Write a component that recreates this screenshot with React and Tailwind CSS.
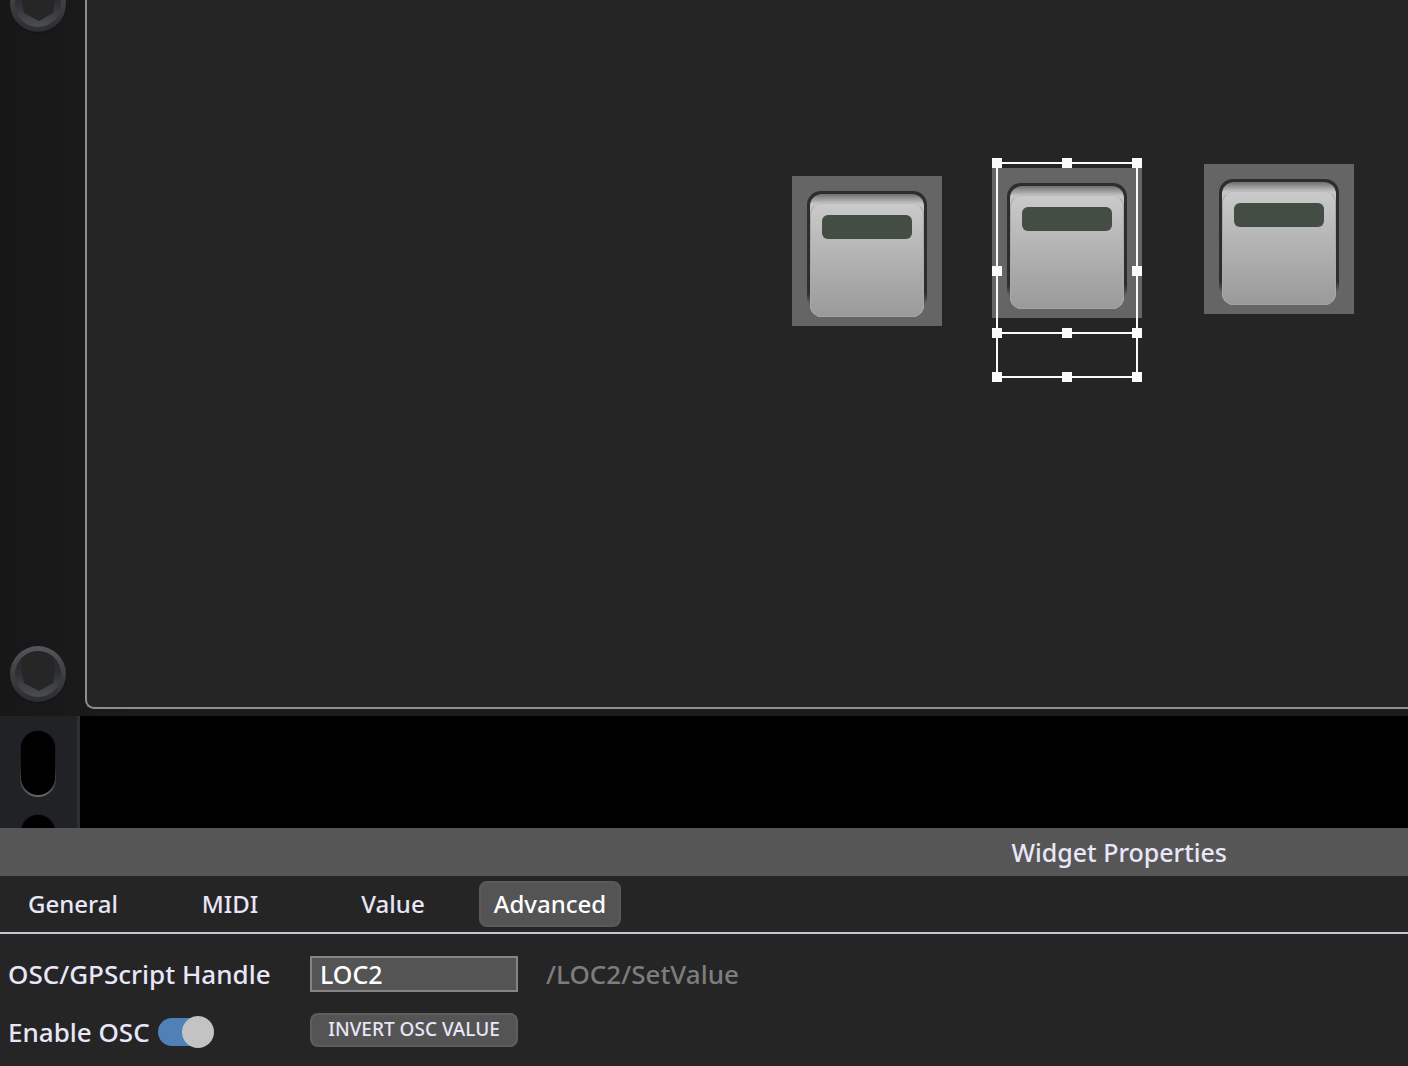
import React, { useState } from 'react';

function Screw({ id }) {
  return (
    <svg className="block size-15 shrink-0" viewBox="0 0 60 60" aria-hidden="true">
      <defs>
        <linearGradient id={`${id}-rim`} x1="0" y1="0" x2="0" y2="1">
          <stop offset="0" stopColor="#54575b" />
          <stop offset="0.5" stopColor="#3c3e42" />
          <stop offset="1" stopColor="#2b2d30" />
        </linearGradient>
        <linearGradient id={`${id}-bowl`} x1="0" y1="0" x2="0" y2="1">
          <stop offset="0" stopColor="#222324" />
          <stop offset="0.5" stopColor="#2e3033" />
          <stop offset="0.8" stopColor="#414347" />
          <stop offset="1" stopColor="#4b4d52" />
        </linearGradient>
      </defs>
      <circle cx="30" cy="31" r="28.5" fill="#151516" />
      <circle cx="30" cy="30" r="28" fill={`url(#${id}-rim)`} />
      <circle cx="30" cy="30" r="23" fill={`url(#${id}-bowl)`} />
      <path d="M17 12 Q30 4 44 12 L47 25 L45 39 L31 47 L16 39 L13 24 Z" fill="#262626" />
    </svg>
  );
}

function RackSlot() {
  return (
    <div className="h-[67px] w-9 shrink-0 rounded-full bg-linear-to-b from-[#1a1b1e] from-50% to-[#65666a] px-px pt-px pb-0.5">
      <div className="size-full rounded-full bg-black" />
    </div>
  );
}

function LedButton({ label, className }) {
  return (
    <button
      type="button"
      aria-label={label}
      className={`absolute flex size-[150px] justify-center bg-[#656565] pt-[15px] ${className}`}
    >
      <span className="block h-[120px] w-[120px] rounded-[14px] bg-linear-to-b from-[#2d2d2d] from-85% to-[#656565] to-95% px-[3px] pt-[3px]">
        <span className="flex h-[123px] flex-col rounded-xl bg-linear-to-b from-[#707070] to-[#c6c6c6] to-8%">
          <span className="mt-[9px] flex flex-1 items-start justify-center rounded-xl border border-x-[#a8a8a8] border-t-[#bcbcbc] border-b-[#a2a2a2] bg-linear-to-b from-[#cacaca] to-[#9a9a9a] pt-[11px]">
            <span className="h-6 w-[90px] rounded-md bg-[#444d43]" />
          </span>
        </span>
      </span>
    </button>
  );
}

function Handle({ className }) {
  return <span className={`absolute size-2.5 bg-[#fafafa] ${className}`} />;
}

function Selection() {
  return (
    <div className="pointer-events-none absolute top-[162px] left-[996px] w-[142px]">
      <div className="relative h-[172px] border-2 border-[#fafafa]">
        <Handle className="-top-1.5 -left-1.5" />
        <Handle className="-top-1.5 left-16" />
        <Handle className="-top-1.5 -right-1.5" />
        <Handle className="top-[102px] -left-1.5" />
        <Handle className="top-[102px] -right-1.5" />
        <Handle className="-bottom-1.5 -left-1.5" />
        <Handle className="-bottom-1.5 left-16" />
        <Handle className="-right-1.5 -bottom-1.5" />
      </div>
      <div className="relative h-11 border-x-2 border-b-2 border-[#fafafa]">
        <Handle className="-bottom-1.5 -left-1.5" />
        <Handle className="-bottom-1.5 left-16" />
        <Handle className="-right-1.5 -bottom-1.5" />
      </div>
    </div>
  );
}

const tabs = ['General', 'MIDI', 'Value', 'Advanced'];

export default function App() {
  const [active, setActive] = useState('Advanced');
  const [handle, setHandle] = useState('LOC2');
  const [enabled, setEnabled] = useState(true);

  return (
    <div className="flex min-h-screen flex-col overflow-hidden bg-[#252525] font-['Noto_Sans',sans-serif] text-[25px] leading-9 font-medium text-[#e8e6f8]">
      <main className="flex min-h-[400px] flex-1 bg-linear-to-r from-[#171717] to-[#1c1c1c] to-10% pb-[7px]">
        <div className="flex w-[85px] shrink-0 flex-col justify-between pl-2">
          <div className="-mt-[26px]">
            <Screw id="upper" />
          </div>
          <div className="mb-[5px]">
            <Screw id="lower" />
          </div>
        </div>
        <div className="relative flex-1 rounded-bl-[9px] border-b-2 border-l-2 border-[#8e8e8e] bg-[#252525]">
          <div className="absolute top-0 -left-[87px]">
            <LedButton label="LOC1" className="top-[176px] left-[792px]" />
            <LedButton label="LOC2" className="top-[168px] left-[992px]" />
            <LedButton label="LOC3" className="top-[164px] left-[1204px]" />
            <Selection />
          </div>
        </div>
      </main>

      <div className="flex h-28 shrink-0 overflow-hidden bg-black">
        <div className="flex w-20 flex-col gap-[17px] border-r-3 border-[#2e2f33] bg-[#212226] pt-[14px] pl-5">
          <RackSlot />
          <RackSlot />
        </div>
      </div>

      <section className="flex min-h-[238px] shrink-0 flex-col">
        <h2 className="flex h-12 items-center justify-end bg-[#565656] pr-[181px]">Widget Properties</h2>

        <nav className="flex h-[58px] items-center gap-[15px] border-b-2 border-[#c9c6d4] pl-0.5 text-[24px]">
          {tabs.map((tab) => (
            <button
              key={tab}
              type="button"
              onClick={() => setActive(tab)}
              className={`flex h-[46px] w-[142px] items-center justify-center rounded-lg border-2 ${
                active === tab ? 'border-[#5a5a5a] bg-[#545454] text-white' : 'border-transparent'
              } ${tab === 'Value' ? 'ml-1.5' : ''}`}
            >
              {tab}
            </button>
          ))}
        </nav>

        <div className="grid grid-cols-[302px_208px_1fr] items-center gap-y-[22px] pt-[22px] pl-2 text-[26px]">
          <label htmlFor="osc-handle">OSC/GPScript Handle</label>
          <input
            id="osc-handle"
            type="text"
            value={handle}
            onChange={(e) => setHandle(e.target.value)}
            className="h-9 w-full border-2 border-[#858585] bg-[#545454] px-2 text-[25px] text-white outline-none"
          />
          <span className="pl-7 text-[#7d7d7d]">/{handle}/SetValue</span>

          <div className="flex items-center gap-2.5">
            <label htmlFor="enable-osc" className="w-[140px] whitespace-nowrap">Enable OSC</label>
            <input
              id="enable-osc"
              type="checkbox"
              role="switch"
              checked={enabled}
              onChange={(e) => setEnabled(e.target.checked)}
              className="relative h-8 w-14 appearance-none before:absolute before:inset-y-0.5 before:left-0 before:w-12 before:rounded-full before:bg-[#666666] checked:before:bg-[#4f80b6] after:absolute after:top-0 after:left-0 after:size-8 after:rounded-full after:bg-[#c3c3c3] checked:after:left-6"
            />
          </div>
          <button
            type="button"
            className="-mt-1 flex h-[34px] items-center justify-center rounded-lg border-2 border-[#5e5e5e] bg-[#545454] pb-0.5 text-[19px] leading-6"
          >
            INVERT OSC VALUE
          </button>
        </div>
      </section>
    </div>
  );
}
